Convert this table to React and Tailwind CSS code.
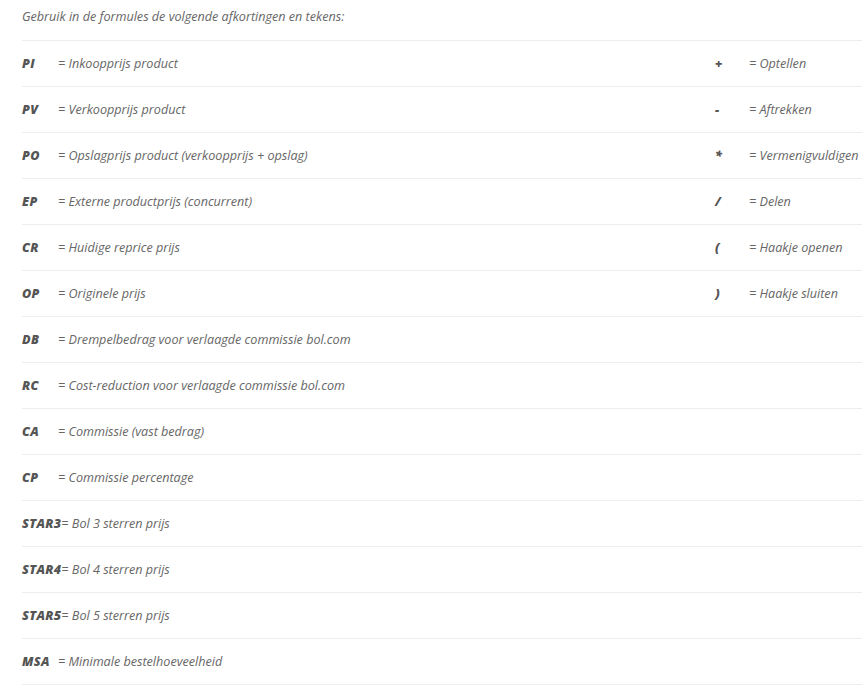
const left = [
  ["PI", "Inkoopprijs product"],
  ["PV", "Verkoopprijs product"],
  ["PO", "Opslagprijs product (verkoopprijs + opslag)"],
  ["EP", "Externe productprijs (concurrent)"],
  ["CR", "Huidige reprice prijs"],
  ["OP", "Originele prijs"],
  ["DB", "Drempelbedrag voor verlaagde commissie bol.com"],
  ["RC", "Cost-reduction voor verlaagde commissie bol.com"],
  ["CA", "Commissie (vast bedrag)"],
  ["CP", "Commissie percentage"],
  ["STAR3", "Bol 3 sterren prijs"],
  ["STAR4", "Bol 4 sterren prijs"],
  ["STAR5", "Bol 5 sterren prijs"],
  ["MSA", "Minimale bestelhoeveelheid"],
];

const right = [
  ["+", "Optellen"],
  ["-", "Aftrekken"],
  ["*", "Vermenigvuldigen"],
  ["/", "Delen"],
  ["(", "Haakje openen"],
  [")", "Haakje sluiten"],
];

export default function App() {
  return (
    <div className="min-h-screen bg-white pl-[22px] font-['Open_Sans',sans-serif] text-[12.6px] italic text-[#666]">
      <p className="h-[40px] pt-[6px] leading-[22px]">
        Gebruik in de formules de volgende afkortingen en tekens:
      </p>
      <div className="border-t border-[#eee]">
        {left.map(([abbr, desc], i) => (
          <div key={abbr} className="flex h-[46px] items-center border-b border-[#eee] pt-[2px]">
            <div className="w-[693px] shrink-0">
              <b className="inline-block min-w-[36px] font-extrabold tracking-[0.3px] text-[#555]">{abbr}</b>
              = {desc}
            </div>
            {right[i] && (
              <div className="whitespace-nowrap">
                <b className="inline-block min-w-[34px] font-extrabold text-[#555]">{right[i][0]}</b>
                = {right[i][1]}
              </div>
            )}
          </div>
        ))}
      </div>
    </div>
  );
}
